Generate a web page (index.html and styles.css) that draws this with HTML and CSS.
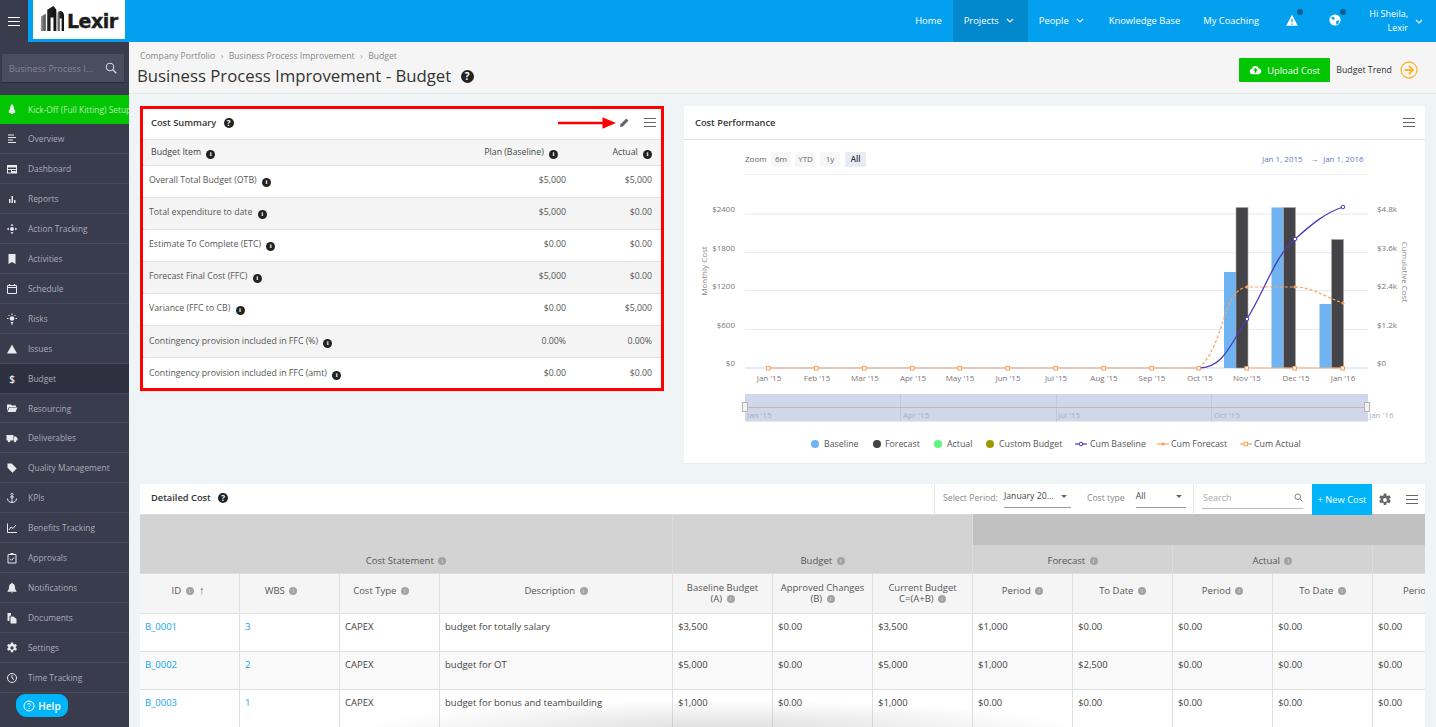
FILE: index.html
```html
<!DOCTYPE html>
<html lang="en">
<head>
<meta charset="utf-8">
<title>Budget</title>
<link rel="stylesheet" href="styles.css">
</head>
<body>
<svg class="defs" width="0" height="0" aria-hidden="true">
  <defs><linearGradient id="bld" x1="0" x2="1" y1="0" y2="0"><stop offset="0" stop-color="#9a9a9a"/><stop offset=".45" stop-color="#222"/><stop offset="1" stop-color="#111"/></linearGradient></defs>
  <symbol id="burger" viewBox="0 0 12 9"><path d="M0 .5h12M0 4.500h12M0 8.500h12" stroke="currentColor" stroke-width="1.100" fill="none"/></symbol>
  <symbol id="chev" viewBox="0 0 8 5"><path d="M1 1l3 3 3-3" stroke="currentColor" stroke-width="1.100" fill="none"/></symbol>
  <symbol id="search" viewBox="0 0 12 12"><circle cx="5" cy="5" r="3.700" stroke="currentColor" stroke-width="1.100" fill="none"/><path d="M7.800 7.800L11.300 11.300" stroke="currentColor" stroke-width="1.300"/></symbol>
  <symbol id="gear" viewBox="0 0 16 16"><path fill="currentColor" fill-rule="evenodd" d="M6.600 .6h2.800l.4 2.200 1.300.6 2-.9 1.500 2.500-1.600 1.400v1.400l1.600 1.400-1.500 2.500-2-.9-1.300.6-.4 2.200H6.600l-.4-2.200-1.300-.6-2 .9-1.500-2.500 1.600-1.400V6.400L1.400 5l1.500-2.500 2 .9 1.300-.6zM8 5.800a2.200 2.200 0 1 0 0 4.400 2.200 2.200 0 0 0 0-4.400z"/></symbol>
</svg>

<div class="app">
  <header class="topbar">
    <button class="menu-btn" type="button" aria-label="Menu"><svg class="ic-burger"><use href="#burger"/></svg></button>
    <div class="logo">
      <svg class="logo-mark" viewBox="0 0 26 27"><path fill="url(#bld)" d="M1 27V12l5-3v18zM7.500 27V5L14 1l3 4v22h-3V13h-3v14z"/><path fill="url(#bld)" d="M18 27V9c0-4 7-4 7 2v16h-2.500V14h-2v13z"/></svg>
      <span class="logo-text">Lexir</span>
    </div>
    <nav class="topnav">
      <a class="tn">Home</a>
      <a class="tn tn-active">Projects <svg class="ic-chev"><use href="#chev"/></svg></a>
      <a class="tn tn-people">People <svg class="ic-chev"><use href="#chev"/></svg></a>
      <a class="tn tn-kb">Knowledge Base</a>
      <a class="tn">My Coaching</a>
      <span class="tn-icon"><svg class="ic14" viewBox="0 0 12 12"><path fill="#fff" d="M6 1.500L11 11H1z"/><path stroke="#03a0f0" d="M6 5v3M6 9v1"/></svg><i class="dot"></i></span>
      <span class="tn-icon"><svg class="ic14" viewBox="0 0 12 12"><circle cx="6" cy="6" r="4.800" fill="#fff"/><path fill="#03a0f0" d="M3 3l3 1-1 2-2-1zM7 7l2.500-1L9 9l-2 1z"/></svg><i class="dot"></i></span>
      <span class="tn-user">Hi Sheila,<br>Lexir</span>
      <svg class="ic-chev user-chev"><use href="#chev"/></svg>
    </nav>
  </header>

  <aside class="sidebar">
    <div class="side-search-wrap">
      <div class="side-search"><span class="side-search-text">Business Process I...</span><svg class="ic-side-search"><use href="#search"/></svg></div>
    </div>
    <ul class="side-list">
      <li class="si si-green"><svg class="si-ic" viewBox="0 0 12 12"><path fill="currentColor" d="M6 0c1.500 1.200 2 3 2 5l1.200 2v2H7.500l-.4 1H4.900l-.4-1H2.800V7L4 5c0-2 .5-3.800 2-5z"/></svg><span class="si-text">Kick-Off (Full Kitting) Setup</span></li>
      <li class="si"><svg class="si-ic" viewBox="0 0 12 12"><path stroke="currentColor" stroke-width="1.100" d="M2 2h6M2 4.500h8M2 7h5M2 9.500h8"/></svg><span class="si-text">Overview</span></li>
      <li class="si"><svg class="si-ic" viewBox="0 0 12 12"><path fill="currentColor" fill-rule="evenodd" d="M1 2h10v8.500H1zM2 4.500v1.500h8V4.500zM2 7v2.500h3V7zm4 0v1h4V7z"/></svg><span class="si-text">Dashboard</span></li>
      <li class="si"><svg class="si-ic" viewBox="0 0 12 12"><path fill="currentColor" d="M3 6h1.500v4H3zM5.500 3H7v7H5.500zM8 7h1.500v3H8z"/></svg><span class="si-text">Reports</span></li>
      <li class="si"><svg class="si-ic" viewBox="0 0 12 12"><path fill="currentColor" d="M6 .8l1.500 2h-3zM6 11.200l-1.500-2h3zM.8 6l2-1.500v3zM11.200 6l-2 1.500v-3z"/><circle cx="6" cy="6" r="2" fill="currentColor"/></svg><span class="si-text">Action Tracking</span></li>
      <li class="si"><svg class="si-ic" viewBox="0 0 12 12"><path fill="currentColor" d="M2.500 1h7v10L6 9l-3.500 2z"/></svg><span class="si-text">Activities</span></li>
      <li class="si"><svg class="si-ic" viewBox="0 0 12 12"><path fill="none" stroke="currentColor" d="M1.500 2.500h9v8h-9zM1.500 4.500h9M3.500 1v2M8.500 1v2"/></svg><span class="si-text">Schedule</span></li>
      <li class="si"><svg class="si-ic" viewBox="0 0 12 12"><circle cx="6" cy="5.500" r="2.300" fill="currentColor"/><path stroke="currentColor" d="M6 .5v1.500M1 5.500h1.500M9.500 5.500H11M2.500 2l1 1M9.500 2l-1 1M4.800 9.500h2.400M5 11h2"/></svg><span class="si-text">Risks</span></li>
      <li class="si"><svg class="si-ic" viewBox="0 0 12 12"><path fill="currentColor" d="M6 1.500L11 10.500H1z"/></svg><span class="si-text">Issues</span></li>
      <li class="si si-active"><span class="si-ic si-dollar">$</span><span class="si-text">Budget</span></li>
      <li class="si si-short"><svg class="si-ic" viewBox="0 0 12 12"><path fill="currentColor" d="M1 2.500h4l1 1h4v1.500H3L1 9zM3.500 5.500H11.500L9.500 10H1.500z"/></svg><span class="si-text">Resourcing</span></li>
      <li class="si"><svg class="si-ic" viewBox="0 0 12 12"><path fill="currentColor" d="M.5 3h7v5.500H.5zM8 4.500h2L11.500 6.500v2H8z"/><circle cx="3" cy="9" r="1.200" fill="currentColor"/><circle cx="9" cy="9" r="1.200" fill="currentColor"/></svg><span class="si-text">Deliverables</span></li>
      <li class="si"><svg class="si-ic" viewBox="0 0 12 12"><path fill="currentColor" d="M1.500 1.500h4.200l5 5-4.200 4.200-5-5z"/></svg><span class="si-text">Quality Management</span></li>
      <li class="si"><svg class="si-ic" viewBox="0 0 12 12"><circle cx="6" cy="2.300" r="1.100" fill="none" stroke="currentColor" stroke-width=".8"/><path fill="none" stroke="currentColor" d="M6 3.500v7M4 5h4M1.500 6.500c0 2.500 2 4 4.500 4s4.500-1.500 4.500-4"/></svg><span class="si-text">KPIs</span></li>
      <li class="si"><svg class="si-ic" viewBox="0 0 12 12"><path fill="none" stroke="currentColor" d="M1.500 1.500v9h9.500M3 8l2-3 2 1.500L10 3"/></svg><span class="si-text">Benefits Tracking</span></li>
      <li class="si"><svg class="si-ic" viewBox="0 0 12 12"><path fill="none" stroke="currentColor" d="M2 2.500h8v8.500H2zM4 6.800l1.500 1.500L8 5.500"/><path fill="currentColor" d="M4.500 1h3v2h-3z"/></svg><span class="si-text">Approvals</span></li>
      <li class="si"><svg class="si-ic" viewBox="0 0 12 12"><path fill="currentColor" d="M6 .8c.5 0 .8.400.8.900C8.500 2.200 9 3.500 9 5.500c0 1.500.5 2.500 1.500 3.500v.8h-9V9C2.500 8 3 7 3 5.500c0-2 .5-3.300 2.200-3.800 0-.5.300-.9.800-.9zM5 10.400h2L6 11.500z"/></svg><span class="si-text">Notifications</span></li>
      <li class="si"><svg class="si-ic" viewBox="0 0 12 12"><path fill="currentColor" d="M1.500 1H5v2.500L3.500 4v5h-2zM4.500 4.500h3L10.500 7v4.500h-6z"/></svg><span class="si-text">Documents</span></li>
      <li class="si"><svg class="si-ic" viewBox="0 0 16 16"><use href="#gear"/></svg><span class="si-text">Settings</span></li>
      <li class="si"><svg class="si-ic" viewBox="0 0 12 12"><circle cx="6" cy="6" r="4.500" fill="none" stroke="currentColor"/><path fill="none" stroke="currentColor" d="M6 3v3l2 1.500"/></svg><span class="si-text">Time Tracking</span></li>
    </ul>
  </aside>

  <main class="main">
    <section class="page-head">
      <div>
        <div class="crumbs"><span>Company Portfolio</span><span class="sep">›</span><span>Business Process Improvement</span><span class="sep">›</span><span>Budget</span></div>
        <h1 class="page-title">Business Process Improvement - Budget <span class="q q-lg">?</span></h1>
      </div>
      <div class="head-actions">
        <button class="upload" type="button"><svg class="ic-cloud" viewBox="0 0 14 10"><path fill="#fff" d="M3.500 9.500A3 3 0 0 1 3 3.600 4 4 0 0 1 10.500 3a3.300 3.300 0 0 1 0 6.500z"/><path fill="#02c602" d="M7 2.500L9.500 5.500H8V8H6V5.500H4.500z"/></svg>Upload Cost</button>
        <span class="trend">Budget Trend</span>
        <svg class="ic-trend" viewBox="0 0 18 18"><circle cx="9" cy="9" r="8" fill="none" stroke="#fbb42c" stroke-width="1.300"/><path fill="none" stroke="#fbb42c" stroke-width="1.800" d="M4.500 9h8M9 5l4 4-4 4"/></svg>
      </div>
    </section>

    <section class="content">
      <div class="top-row">
        <div class="panel panel-red">
          <div class="panel-head panel-head-sum">
            <span class="panel-title">Cost Summary <span class="q">?</span></span>
            <svg class="red-arrow" viewBox="0 0 60 12"><path fill="#f00" d="M0 4.700h46V0l14 6-14 6V7.300H0z"/></svg>
            <div class="panel-tools">
              <svg class="ic-pencil" viewBox="0 0 12 12"><path fill="#666" d="M1 11l.6-3L8 1.700 10.300 4 4 10.400z"/></svg>
              <svg class="ic-burger-g"><use href="#burger"/></svg>
            </div>
          </div>
          <table class="sum">
            <thead>
              <tr><th class="sl th-pad">Budget Item <i class="info">i</i></th><th class="sr">Plan (Baseline) <i class="info">i</i></th><th class="sr2">Actual <i class="info">i</i></th></tr>
            </thead>
            <tbody>
              <tr><td>Overall Total Budget (OTB) <i class="info">i</i></td><td class="n">$5,000</td><td class="n">$5,000</td></tr>
              <tr><td>Total expenditure to date <i class="info">i</i></td><td class="n">$5,000</td><td class="n">$0.00</td></tr>
              <tr><td>Estimate To Complete (ETC) <i class="info">i</i></td><td class="n">$0.00</td><td class="n">$0.00</td></tr>
              <tr><td>Forecast Final Cost (FFC) <i class="info">i</i></td><td class="n">$5,000</td><td class="n">$0.00</td></tr>
              <tr><td>Variance (FFC to CB) <i class="info">i</i></td><td class="n">$0.00</td><td class="n">$5,000</td></tr>
              <tr><td>Contingency provision included in FFC (%) <i class="info">i</i></td><td class="n">0.00%</td><td class="n">0.00%</td></tr>
              <tr><td>Contingency provision included in FFC (amt) <i class="info">i</i></td><td class="n">$0.00</td><td class="n">$0.00</td></tr>
            </tbody>
          </table>
        </div>

        <div class="panel panel-chart">
          <div class="panel-head panel-head-chart">
            <span class="panel-title">Cost Performance</span>
            <svg class="ic-burger-g"><use href="#burger"/></svg>
          </div>
          <svg class="chart" viewBox="684 140 741 323" width="741" height="323">
            <g class="t-zoom">
              <text x="745" y="162">Zoom</text>
              <rect x="771" y="152" width="20" height="15" rx="2" fill="#f7f7f7"/><text x="781" y="162" text-anchor="middle">6m</text>
              <rect x="795" y="152" width="21" height="15" rx="2" fill="#f7f7f7"/><text x="805.500" y="162" text-anchor="middle">YTD</text>
              <rect x="820" y="152" width="20" height="15" rx="2" fill="#f7f7f7"/><text x="830" y="162" text-anchor="middle">1y</text>
              <rect x="845" y="152" width="21" height="15" rx="2" fill="#e6ebf5"/><text class="t-strong" x="855.500" y="162" text-anchor="middle">All</text>
            </g>
            <path d="M745 174.500h623" stroke="#f0f0f2"/>
            <g class="t-range">
              <text x="1262" y="162">Jan 1, 2015</text>
              <text class="t-arrow" x="1310" y="162">→</text>
              <text x="1323" y="162">Jan 1, 2016</text>
            </g>
            <g stroke="#e8e9ed" stroke-width="1">
              <path d="M745 214h623M745 252.500h623M745 290.500h623M745 329.500h623"/>
            </g>
            <path d="M745 368h623" stroke="#ccd6eb"/>
            <g class="t-axis" text-anchor="end">
              <text x="735" y="212">$2400</text><text x="735" y="251">$1800</text><text x="735" y="289">$1200</text><text x="735" y="328">$600</text><text x="735" y="366">$0</text>
            </g>
            <g class="t-axis">
              <text x="1377" y="212">$4.8k</text><text x="1377" y="251">$3.6k</text><text x="1377" y="289">$2.4k</text><text x="1377" y="328">$1.2k</text><text x="1377" y="366">$0</text>
            </g>
            <text class="t-title" transform="translate(707 271) rotate(-90)" text-anchor="middle" y="0" x="0">Monthly Cost</text>
            <text class="t-title" transform="translate(1402 272) rotate(90)" text-anchor="middle" y="0" x="0">Cumulative Cost</text>
            <g fill="#6fb3f0">
              <rect x="1224" y="272" width="12" height="96"/><rect x="1271.500" y="207.500" width="12" height="160.500"/><rect x="1319.500" y="304" width="12" height="64"/>
            </g>
            <g fill="#434348" stroke="#aaa" stroke-width=".6">
              <rect x="1236" y="207.500" width="12" height="160.500"/><rect x="1283.500" y="207.500" width="12" height="160.500"/><rect x="1331.500" y="239.500" width="12" height="128.500"/>
            </g>
            <path d="M768 368H1199" stroke="#e2a27c" stroke-width="1.200"/>
            <path d="M1247 368H1343" stroke="#f7b27c" stroke-width="1.200"/>
            <path d="M1199 368C1223 368 1230 345 1247 319C1265 290 1275 256 1295 239C1312 224 1325 213 1343 207" fill="none" stroke="#4a3bb8" stroke-width="1.300"/>
            <path d="M1199 368C1225 345 1222 290 1247 287C1265 287 1275 287 1295 287C1312 287 1325 297 1343 303" fill="none" stroke="#f7a35c" stroke-width="1.200" stroke-dasharray="3 2"/>
            <g fill="#fff" stroke="#4a3bb8"><circle cx="1247" cy="319" r="1.800"/><circle cx="1295" cy="239" r="1.800"/><circle cx="1343" cy="207" r="1.800"/></g>
            <g fill="#f7a35c"><path d="M1247 285l2 2-2 2-2-2zM1295 285l2 2-2 2-2-2zM1343 301l2 2-2 2-2-2z"/></g>
            <g fill="#fff" stroke="#f7a35c" stroke-width="1.100">
              <rect x="766.500" y="366.500" width="3.500" height="3.500"/><rect x="814.500" y="366.500" width="3.500" height="3.500"/><rect x="862.500" y="366.500" width="3.500" height="3.500"/><rect x="910.500" y="366.500" width="3.500" height="3.500"/><rect x="958" y="366.500" width="3.500" height="3.500"/><rect x="1006" y="366.500" width="3.500" height="3.500"/><rect x="1054" y="366.500" width="3.500" height="3.500"/><rect x="1102" y="366.500" width="3.500" height="3.500"/><rect x="1150" y="366.500" width="3.500" height="3.500"/><rect x="1197" y="366.500" width="3.500" height="3.500"/><rect x="1245" y="366.500" width="3.500" height="3.500"/><rect x="1293" y="366.500" width="3.500" height="3.500"/><rect x="1341" y="366.500" width="3.500" height="3.500"/>
            </g>
            <g class="t-axis" text-anchor="middle">
              <text x="769" y="381">Jan '15</text><text x="817" y="381">Feb '15</text><text x="865" y="381">Mar '15</text><text x="913" y="381">Apr '15</text><text x="960" y="381">May '15</text><text x="1008" y="381">Jun '15</text><text x="1056" y="381">Jul '15</text><text x="1104" y="381">Aug '15</text><text x="1152" y="381">Sep '15</text><text x="1200" y="381">Oct '15</text><text x="1247" y="381">Nov '15</text><text x="1296" y="381">Dec '15</text><text x="1343" y="381">Jan '16</text>
            </g>
            <rect x="745" y="394" width="623" height="27.500" fill="#d0d7ea"/>
            <path d="M900.500 394v27.500M1056.500 394v27.500M1211.500 394v27.500" stroke="#c2c9de"/>
            <path d="M745 407.500h623" stroke="#c3b6b6"/>
            <g class="t-nav">
              <text x="747" y="418">Jan '15</text><text x="903" y="418">Apr '15</text><text x="1058" y="418">Jul '15</text><text x="1214" y="418">Oct '15</text><text x="1369" y="418">Jan '16</text>
            </g>
            <g fill="#f2f2f2" stroke="#b5b5b5">
              <rect x="742.500" y="402.500" width="5" height="9"/><rect x="1364.500" y="402.500" width="5" height="9"/>
            </g>
            <g>
              <circle cx="815" cy="444" r="4" fill="#6fb3f0"/><circle cx="877" cy="444" r="4" fill="#434348"/><circle cx="938" cy="444" r="4" fill="#5cf77f"/><circle cx="990" cy="444" r="4" fill="#9a9a00"/>
              <path d="M1075 444h12" stroke="#4a3bb8" stroke-width="1.200"/><circle cx="1081" cy="444" r="1.800" fill="#fff" stroke="#4a3bb8"/>
              <path d="M1157 444h12" stroke="#f7a35c" stroke-width="1.200"/><path d="M1163 442l2 2-2 2-2-2z" fill="#f7a35c"/>
              <path d="M1240 444h12" stroke="#f7a35c" stroke-width="1.200"/><rect x="1244" y="442.300" width="3.500" height="3.500" fill="#fff" stroke="#f7a35c"/>
            </g>
            <g class="t-legend">
              <text x="824" y="447">Baseline</text><text x="885" y="447">Forecast</text><text x="947" y="447">Actual</text><text x="999" y="447">Custom Budget</text><text x="1090" y="447">Cum Baseline</text><text x="1171" y="447">Cum Forecast</text><text x="1254" y="447">Cum Actual</text>
            </g>
          </svg>
        </div>
      </div>

      <div class="panel panel-detail">
        <div class="detail-bar">
          <span class="panel-title detail-title">Detailed Cost <span class="q">?</span></span>
          <div class="filter">
            <span class="f-label">Select Period:</span>
            <span class="f-select f-period">January 20...<i class="caret"></i></span>
            <span class="f-label f-label-2">Cost type</span>
            <span class="f-select f-type">All<i class="caret"></i></span>
          </div>
          <div class="f-search"><span class="f-search-in">Search<svg class="ic-search-g"><use href="#search"/></svg></span></div>
          <button class="new-cost" type="button">+ New Cost</button>
          <svg class="ic-gear"><use href="#gear"/></svg>
          <svg class="ic-burger-g"><use href="#burger"/></svg>
        </div>
        <table class="detail">
          <colgroup>
            <col class="c-id"><col class="c-n"><col class="c-n"><col class="c-desc"><col class="c-n"><col class="c-n"><col class="c-n"><col class="c-n"><col class="c-n"><col class="c-n"><col class="c-n"><col class="c-n"><col class="c-n">
          </colgroup>
          <thead>
            <tr class="r1">
              <th class="g1" colspan="4" rowspan="2">Cost Statement <i class="inf">i</i></th>
              <th class="g1" colspan="3" rowspan="2">Budget <i class="inf">i</i></th>
              <th class="g2" colspan="6"></th>
            </tr>
            <tr class="r2">
              <th class="g1 gm" colspan="2">Forecast <i class="inf">i</i></th>
              <th class="g1 gm" colspan="2">Actual <i class="inf">i</i></th>
              <th class="g1 gm" colspan="2"></th>
            </tr>
            <tr class="r3">
              <th class="h-id">ID <i class="inf">i</i> <span class="sort">↑</span></th>
              <th class="h-sort">WBS <i class="inf">i</i></th>
              <th class="h-sort">Cost Type <i class="inf">i</i></th>
              <th>Description <i class="inf">i</i></th>
              <th class="two">Baseline Budget<br>(A) <i class="inf">i</i></th>
              <th class="two">Approved Changes<br>(B) <i class="inf">i</i></th>
              <th class="two">Current Budget<br>C=(A+B) <i class="inf">i</i></th>
              <th>Period <i class="inf">i</i></th>
              <th>To Date <i class="inf">i</i></th>
              <th>Period <i class="inf">i</i></th>
              <th>To Date <i class="inf">i</i></th>
              <th class="clip">Period <i class="inf">i</i></th>
              <th></th>
            </tr>
          </thead>
          <tbody>
            <tr><td><a>B_0001</a></td><td><a>3</a></td><td>CAPEX</td><td>budget for totally salary</td><td>$3,500</td><td>$0.00</td><td>$3,500</td><td>$1,000</td><td>$0.00</td><td>$0.00</td><td>$0.00</td><td>$0.00</td><td></td></tr>
            <tr><td><a>B_0002</a></td><td><a>2</a></td><td>CAPEX</td><td>budget for OT</td><td>$5,000</td><td>$0.00</td><td>$5,000</td><td>$1,000</td><td>$2,500</td><td>$0.00</td><td>$0.00</td><td>$0.00</td><td></td></tr>
            <tr><td><a>B_0003</a></td><td><a>1</a></td><td>CAPEX</td><td>budget for bonus and teambuilding</td><td>$1,000</td><td>$0.00</td><td>$1,000</td><td>$0.00</td><td>$0.00</td><td>$0.00</td><td>$0.00</td><td>$0.00</td><td></td></tr>
          </tbody>
        </table>
      </div>
    </section>
  </main>
</div>

<button class="help" type="button"><svg class="ic-help" viewBox="0 0 12 12"><circle cx="6" cy="6" r="5" fill="none" stroke="#fff"/><path fill="none" stroke="#fff" d="M4.500 4.700C4.500 3 7.500 3 7.500 4.700c0 1.200-1.500 1.200-1.500 2.400M6 8v1"/></svg>Help</button>
<div class="bottom-shade"></div>
</body>
</html>
```
FILE: styles.css
```css
* { box-sizing: border-box; }
html, body { margin: 0; height: 727px; overflow: hidden; }
body { font-family: "Open Sans", "Liberation Sans", sans-serif; font-size: 9px; color: #555; background: #eff4f7; position: relative; }
.defs { position: absolute; }
button { font-family: inherit; border: 0; padding: 0; }

.app { display: grid; grid-template-columns: 129px 1fr; grid-template-rows: 42px 685px; height: 727px; }

/* top bar */
.topbar { grid-column: 1 / 3; display: flex; background: #03a0f0; height: 42px; }
.menu-btn { width: 28px; background: #393c4d; color: #fff; display: flex; align-items: center; justify-content: center; }
.ic-burger { width: 12px; height: 9px; }
.logo { margin-left: 5px; width: 92px; height: 39px; background: #fff; display: flex; align-items: flex-start; padding: 5px 0 0 7px; }
.logo-mark { width: 25px; height: 26px; flex: none; }
.logo-text { font-family: "DejaVu Sans", sans-serif; font-weight: 700; font-size: 19px; color: #1c1c1c; letter-spacing: -.5px; margin-left: 2px; line-height: 19px; padding-top: 7px; -webkit-text-stroke: .4px #1c1c1c; }
.topnav { margin-left: auto; display: flex; align-items: center; height: 42px; color: #fff; padding-right: 13px; font-size: 9.400px; }
.tn { color: #fff; height: 42px; display: flex; align-items: center; padding: 0 11px 2px; gap: 7px; }
.tn-active { background: #0288cc; padding-right: 14px; }
.tn-people { padding-right: 14px; }
.tn-kb { padding-right: 12px; }
.ic-chev { width: 8px; height: 5px; color: #fff; }
.tn-icon { position: relative; width: 14px; height: 14px; margin: 0 0 2px 15px; }
.tn-icon + .tn-icon { margin-left: 29px; }
.ic14 { width: 14px; height: 14px; display: block; }
.dot { position: absolute; width: 6px; height: 6px; border-radius: 50%; background: #0d5f95; top: -4px; right: -4px; }
.tn-user { text-align: right; line-height: 14px; width: 42px; margin-left: 24px; white-space: nowrap; font-size: 9px; }
.user-chev { margin-left: 7px; }

/* sidebar */
.sidebar { background: #393c4d; color: #b9bbc5; height: 685px; }
.side-search-wrap { height: 53px; padding: 12px 5px 0 2px; }
.side-search { display: flex; align-items: center; justify-content: space-between; height: 28px; background: #4a4c5f; padding: 0 7px 0 7px; box-shadow: 0 1px 1px #2b2d3b; color: #83859a; }
.side-search-text { font-size: 9px; white-space: nowrap; }
.ic-side-search { width: 12px; height: 12px; color: #d5d6dc; }
.side-list { list-style: none; margin: 0; padding: 0; }
.si { display: flex; align-items: center; height: 30px; border-bottom: 1px solid #464a5b; color: #a9abb7; white-space: nowrap; overflow: hidden; }
.si-short { height: 29px; }
.si-text { font-size: 8.400px; }
.si-ic { flex: none; width: 12px; height: 12px; margin: 0 10px 0 6px; color: #e9e9ee; display: block; }
.si-dollar { font-size: 10px; text-align: center; line-height: 12px; font-weight: 600; }
.si-green { height: 29px; background: #02c602; color: #b5eeb5; border: 0; }
.si-active { background: #2e3040; }

/* page head */
.main { min-width: 0; height: 685px; overflow: hidden; }
.page-head { height: 52px; background: #f5f5f5; border-bottom: 1px solid #e3e5e7; display: flex; justify-content: space-between; padding: 8px 18px 0 8px; }
.crumbs { display: flex; gap: 5.500px; font-size: 8.650px; color: #888; padding-left: 3px; line-height: 12px; }
.sep { color: #999; }
.page-title { margin: 3px 0 0; font-size: 16.750px; font-weight: 400; color: #333; line-height: 22px; display: flex; align-items: center; gap: 5px; white-space: pre; }
.q { display: inline-block; width: 10px; height: 10px; border-radius: 50%; background: #222; color: #fff; font-size: 8px; font-weight: 700; line-height: 10px; text-align: center; font-style: normal; vertical-align: 0; margin-left: 5px; }
.q-lg { width: 13px; height: 13px; font-size: 10px; line-height: 13px; margin-left: 0; }
.head-actions { display: flex; align-items: center; height: 24px; margin-top: 8px; }
.upload { width: 91px; height: 24px; background: #02c602; color: #fff; border-radius: 1px; display: flex; align-items: center; justify-content: center; gap: 5px; font-size: 9.300px; }
.ic-cloud { width: 13px; height: 10px; }
.trend { margin-left: 6px; color: #333; font-size: 8.800px; white-space: nowrap; }
.ic-trend { width: 18px; height: 18px; margin-left: 8px; }

/* content */
.content { padding: 12px 11px 0 11px; }
.top-row { display: grid; grid-template-columns: 524px 741px; column-gap: 20px; align-items: start; }
.panel { background: #fff; box-shadow: 0 1px 1px rgba(0,0,0,.04); }
.panel-red { border: 3px solid #f00; height: 285px; }
.panel-head { position: relative; height: 31px; display: flex; align-items: center; justify-content: space-between; padding: 0 7px 0 8px; border-bottom: 1px solid #e2e2e2; }
.panel-head-sum { padding: 0 5px 3px 8px; }
.panel-title { font-size: 9.300px; font-weight: 600; color: #333; white-space: nowrap; }
.panel-tools { display: flex; align-items: center; gap: 14px; }
.ic-pencil { width: 11px; height: 11px; }
.ic-burger-g { width: 12px; height: 9px; color: #666; flex: none; }
.red-arrow { position: absolute; left: 415px; top: 8px; width: 58px; height: 12px; }

.sum { width: 100%; border-collapse: collapse; table-layout: fixed; font-size: 8.750px; }
.sum th { height: 25px; background: #f5f5f5; font-weight: 400; color: #444; border-bottom: 1px solid #e2e2e2; font-size: 8.750px; }
.sum .sl { text-align: left; padding-left: 8px; }
.sum .sr { width: 120px; text-align: right; padding-right: 13px; }
.sum .sr2 { width: 90px; text-align: right; padding-right: 9px; }
.sum td { height: 32px; border-bottom: 1px solid #e2e2e2; padding: 0 0 2px 6px; color: #555; }
.sum tbody tr:nth-child(even) td { background: #f4f4f4; }
.sum tbody tr:nth-child(n+6) td { padding-bottom: 0; }
.sum tbody tr:last-child td { border-bottom: 0; }
.sum .n { text-align: right; padding: 0 9px 2px 0; }
.sum td:nth-child(2).n { padding-right: 5px; }
.info { display: inline-block; width: 9px; height: 9px; border-radius: 50%; background: #222; color: #fff; font-size: 7px; font-weight: 700; line-height: 9px; text-align: center; font-style: normal; margin-left: 3px; font-family: "Liberation Serif", serif; vertical-align: -1px; }

.panel-chart { height: 357px; }
.panel-head-chart { height: 34px; padding: 0 10px 1px 11px; }
.chart { display: block; }
.chart text { font-family: "Open Sans", "Liberation Sans", sans-serif; font-size: 8px; fill: #666; }
.chart .t-zoom text { fill: #666; }
.chart .t-zoom .t-strong { fill: #333; font-weight: 600; }
.chart .t-range text { fill: #5f79c6; }
.chart .t-range .t-arrow { fill: #555; }
.chart .t-axis text { fill: #777; }
.chart .t-title { fill: #888; }
.chart .t-nav text { fill: #a9b0c2; }
.chart .t-legend text { fill: #555; font-size: 8.800px; }

.panel-detail { margin-top: 21px; height: 243px; overflow: hidden; }
.detail-bar { height: 31px; display: flex; align-items: center; padding-right: 7px; }
.detail-title { padding: 0 0 5px 11px; margin-right: auto; font-weight: 600; }
.filter { display: flex; align-items: center; height: 31px; width: 260px; padding: 0 0 3px 8px; border-left: 1px solid #e6e6e6; border-right: 1px solid #e6e6e6; font-size: 8.700px; }
.f-label { color: #888; margin-right: 6px; white-space: nowrap; }
.f-label-2 { margin-left: 16px; margin-right: 11px; }
.f-select { display: flex; justify-content: space-between; align-items: center; height: 19px; border-bottom: 1px solid #999; color: #444; white-space: nowrap; padding: 0 4px 3px 0; }
.f-period { width: 67px; }
.f-type { width: 50px; }
.caret { width: 0; height: 0; border: 3.500px solid transparent; border-top: 3.500px solid #666; border-bottom: 0; }
.f-search { width: 118px; height: 31px; padding: 6px 9px 0 8px; display: flex; }
.f-search-in { display: flex; width: 100%; height: 19px; justify-content: space-between; align-items: center; border-bottom: 1px solid #bbb; color: #aaa; padding: 0 0 3px 1px; }
.ic-search-g { width: 9px; height: 9px; color: #666; }
.new-cost { width: 60px; height: 31px; background: #00b4f9; color: #fff; font-size: 9.300px; font-weight: 400; white-space: nowrap; padding-bottom: 1px; }
.ic-gear { width: 14px; height: 14px; color: #666; margin: 0 14px 0 6px; flex: none; }

.detail { border-collapse: collapse; table-layout: fixed; width: 1333px; margin: -1px 0 0 -1px; font-size: 9.500px; }
.c-id, .c-n { width: 100px; }
.c-desc { width: 233px; }
.detail th { font-weight: 400; font-size: 9.500px; color: #555; border: 1px solid #e0e0e0; text-align: center; line-height: 11px; padding: 0 0 7px; }
.detail .r1 { height: 30px; }
.detail .r2 { height: 29px; }
.detail .r3 { height: 40px; }
.detail .g1 { background: #d3d3d3; border-color: #dcdcdc; vertical-align: bottom; padding-bottom: 7px; }
.detail .gm { vertical-align: middle; padding: 2px 0 0; }
.detail .g2 { background: #c1c1c1; border-color: #c1c1c1; padding: 0; }
.detail .r3 th { background: #f5f5f5; }
.detail .r3 .two { padding: 0 0 1px; }
.detail .r3 .h-id { padding-right: 3px; }
.detail .r3 .h-sort { padding-right: 17px; }
.detail .r3 .clip { text-align: left; padding-left: 30px; white-space: nowrap; }
.inf { display: inline-block; width: 8px; height: 8px; border-radius: 50%; background: #a3a3a3; color: #e5e5e5; font-size: 6px; line-height: 8px; text-align: center; font-style: normal; margin-left: 2px; vertical-align: 1px; }
.sort { font-size: 11px; margin-left: 3px; color: #666; }
.detail td { height: 38px; vertical-align: top; padding: 6px 5px 0 5px; border: 1px solid #e0e0e0; color: #444; white-space: nowrap; }
.detail tbody tr:nth-child(even) td { background: #f9f9f9; }
.detail a { color: #0fa6e6; }

.help { position: absolute; left: 16px; top: 694px; width: 52px; height: 23px; background: #00b4f9; color: #fff; font-size: 10px; font-weight: 600; border-radius: 9px 9px 9px 11px; display: flex; align-items: center; justify-content: center; gap: 3px; }
.ic-help { width: 12px; height: 12px; }
.bottom-shade { position: absolute; left: 360px; top: 700px; width: 720px; height: 60px; background: radial-gradient(closest-side, rgba(150,150,150,.32), rgba(150,150,150,0)); pointer-events: none; }
```
